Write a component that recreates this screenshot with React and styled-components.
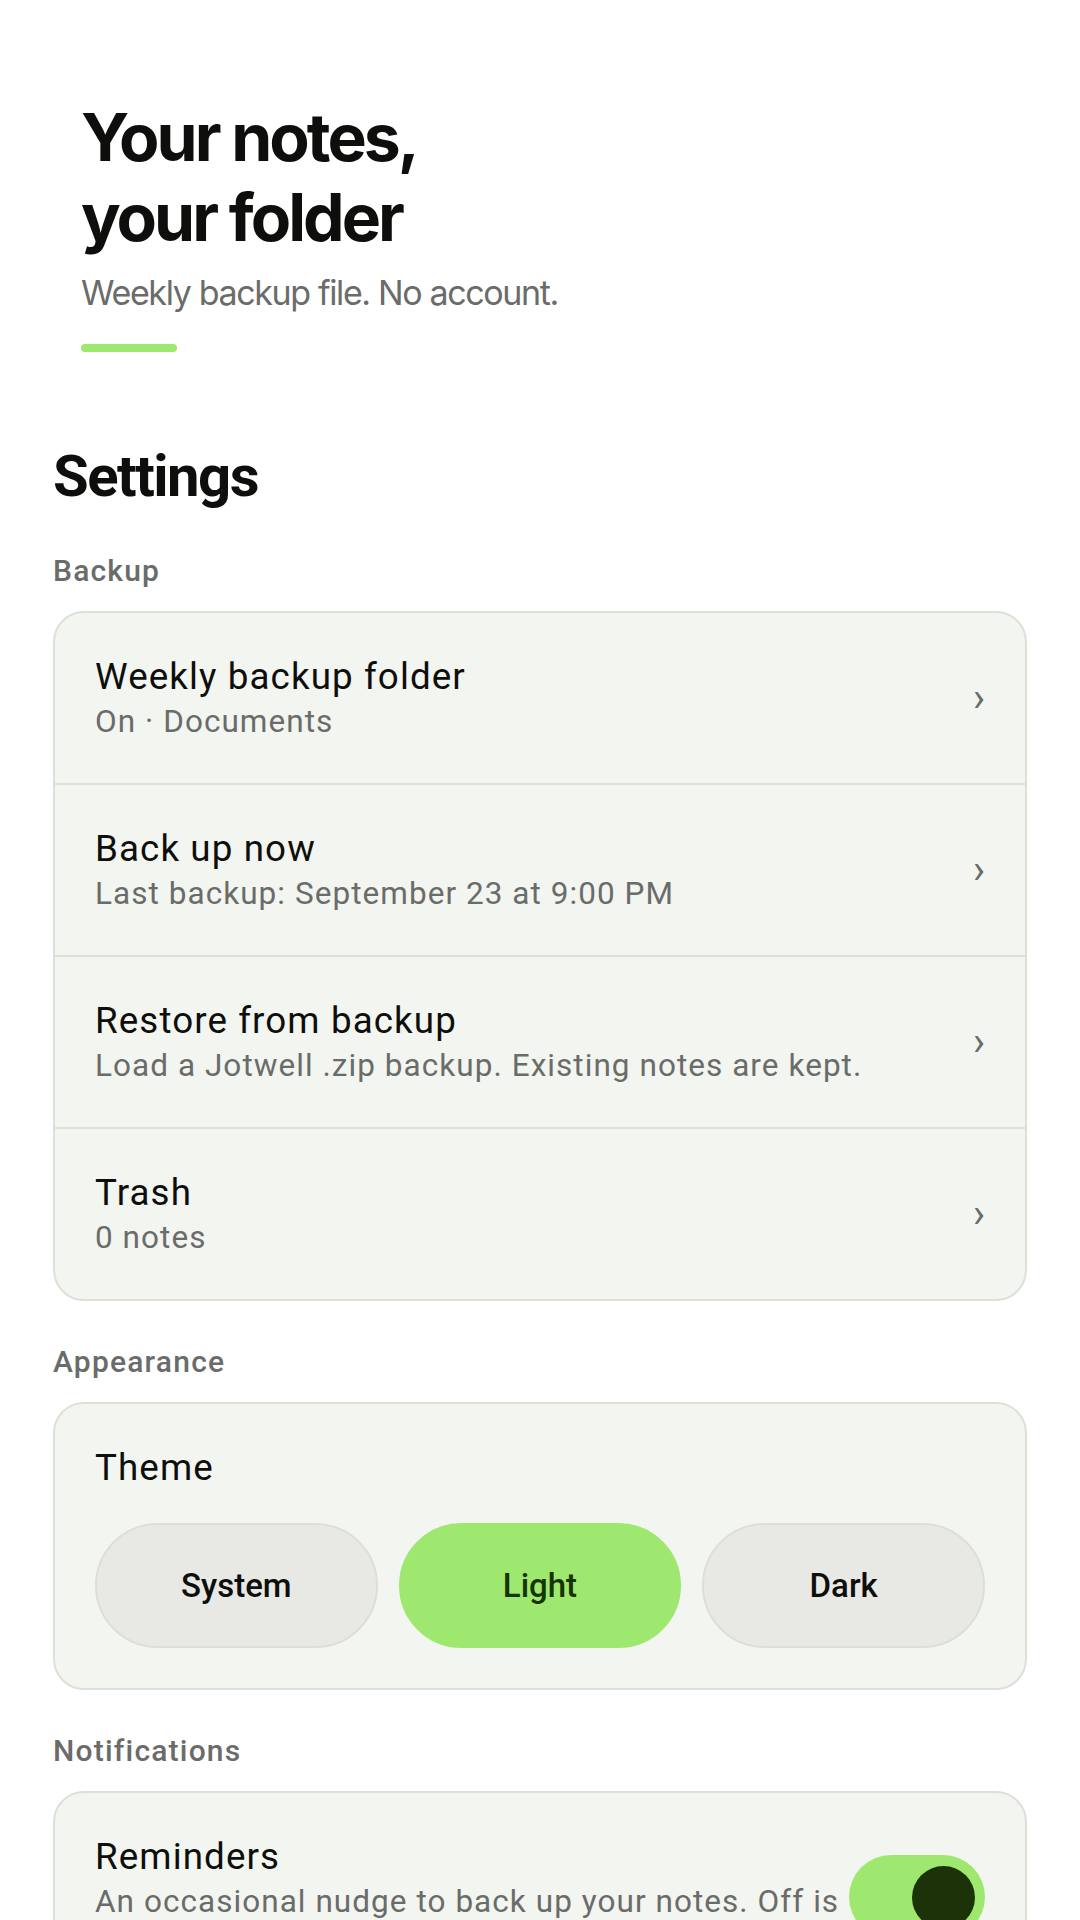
import React, { useState } from "react";
import styled, { createGlobalStyle } from "styled-components";

const GlobalStyle = createGlobalStyle`
  body {
    margin: 0;
    background: #ffffff;
    font-family: Roboto, "Noto Sans", "Liberation Sans", sans-serif;
    color: #0e0f0c;
  }
  * {
    box-sizing: border-box;
  }
`;

const Page = styled.div`
  padding: 97px 53px 80px;
`;

const Hero = styled.header`
  padding-left: 28px;
`;

const HeroTitle = styled.h1`
  margin: 0;
  font-family: Inter, Roboto, sans-serif;
  font-weight: 700;
  font-size: 66px;
  line-height: 80px;
  letter-spacing: -0.045em;
  color: #0e0f0c;
`;

const HeroSub = styled.p`
  margin: 15px 0 0;
  font-family: Inter, Roboto, sans-serif;
  font-size: 34px;
  line-height: 41px;
  letter-spacing: -0.04em;
  color: #6a6c6a;
`;

const Accent = styled.div`
  width: 96px;
  height: 8px;
  margin-top: 31px;
  border-radius: 4px;
  background: #9fe870;
`;

const Heading = styled.h2`
  margin: 90px 0 44px;
  font-size: 58px;
  line-height: 68px;
  font-weight: 700;
  letter-spacing: -0.026em;
`;

const SectionLabel = styled.h3`
  margin: 0 0 23px;
  font-size: 30px;
  line-height: 34px;
  font-weight: 500;
  letter-spacing: 0.04em;
  color: #6a6c6a;
`;

const Section = styled.section`
  & + & {
    margin-top: 44px;
  }
`;

const Card = styled.div`
  background: #f3f5f0;
  border: 2px solid #dde0d7;
  border-radius: 31px;
  overflow: hidden;
`;

const Row = styled.div`
  display: flex;
  align-items: center;
  gap: 6px;
  padding: 42px 40px;
  & + & {
    border-top: 2px solid #dde0d7;
  }
`;

const RowText = styled.div`
  flex: 1;
  min-width: 0;
`;

const RowTitle = styled.div`
  font-size: 36.75px;
  line-height: 44px;
  letter-spacing: 1.1px;
  color: #0e0f0c;
`;

const RowSub = styled.div`
  margin-top: 4px;
  font-size: 31.5px;
  line-height: 38px;
  letter-spacing: 1.05px;
  color: #6a6c6a;
`;

const Chevron = styled.span`
  font-size: 40px;
  line-height: 44px;
  color: #6a6c6a;
`;

const ThemeBlock = styled.div`
  padding: 42px 40px 40px;
`;

const Segments = styled.div`
  display: grid;
  grid-template-columns: repeat(3, 1fr);
  gap: 21px;
  margin-top: 33px;
`;

const Segment = styled.button`
  height: 125px;
  border-radius: 63px;
  border: 2px solid ${(p) => (p.$active ? "#9fe870" : "#dcdfd6")};
  background: ${(p) => (p.$active ? "#9fe870" : "#e8e9e4")};
  color: ${(p) => (p.$active ? "#163300" : "#0e0f0c")};
  font-family: Roboto, sans-serif;
  font-size: 33px;
  font-weight: 500;
  cursor: pointer;
`;

const Switch = styled.button`
  flex: none;
  width: 136px;
  height: 84px;
  padding: 0 10.5px;
  border: none;
  border-radius: 42px;
  background: ${(p) => (p.$on ? "#9fe870" : "#dcdfd6")};
  display: flex;
  align-items: center;
  justify-content: ${(p) => (p.$on ? "flex-end" : "flex-start")};
  cursor: pointer;
`;

const Thumb = styled.span`
  width: 63px;
  height: 63px;
  border-radius: 50%;
  background: #1c3208;
`;

const backupRows = [
  { title: "Weekly backup folder", sub: "On · Documents" },
  { title: "Back up now", sub: "Last backup: September 23 at 9:00 PM" },
  {
    title: "Restore from backup",
    sub: "Load a Jotwell .zip backup. Existing notes are kept.",
  },
  { title: "Trash", sub: "0 notes" },
];

const themes = ["System", "Light", "Dark"];

export default function App() {
  const [theme, setTheme] = useState("Light");
  const [reminders, setReminders] = useState(true);

  return (
    <>
      <GlobalStyle />
      <Page>
        <Hero>
          <HeroTitle>
            Your notes,
            <br />
            your folder
          </HeroTitle>
          <HeroSub>Weekly backup file. No account.</HeroSub>
          <Accent />
        </Hero>

        <Heading>Settings</Heading>

        <Section>
          <SectionLabel>Backup</SectionLabel>
          <Card>
            {backupRows.map((row) => (
              <Row key={row.title}>
                <RowText>
                  <RowTitle>{row.title}</RowTitle>
                  <RowSub>{row.sub}</RowSub>
                </RowText>
                <Chevron>›</Chevron>
              </Row>
            ))}
          </Card>
        </Section>

        <Section>
          <SectionLabel>Appearance</SectionLabel>
          <Card>
            <ThemeBlock>
              <RowTitle>Theme</RowTitle>
              <Segments>
                {themes.map((t) => (
                  <Segment
                    key={t}
                    $active={t === theme}
                    onClick={() => setTheme(t)}
                  >
                    {t}
                  </Segment>
                ))}
              </Segments>
            </ThemeBlock>
          </Card>
        </Section>

        <Section>
          <SectionLabel>Notifications</SectionLabel>
          <Card>
            <Row>
              <RowText>
                <RowTitle>Reminders</RowTitle>
                <RowSub>
                  An occasional nudge to back up your notes. Off is the
                  default.
                </RowSub>
              </RowText>
              <Switch $on={reminders} onClick={() => setReminders(!reminders)}>
                <Thumb />
              </Switch>
            </Row>
          </Card>
        </Section>
      </Page>
    </>
  );
}
